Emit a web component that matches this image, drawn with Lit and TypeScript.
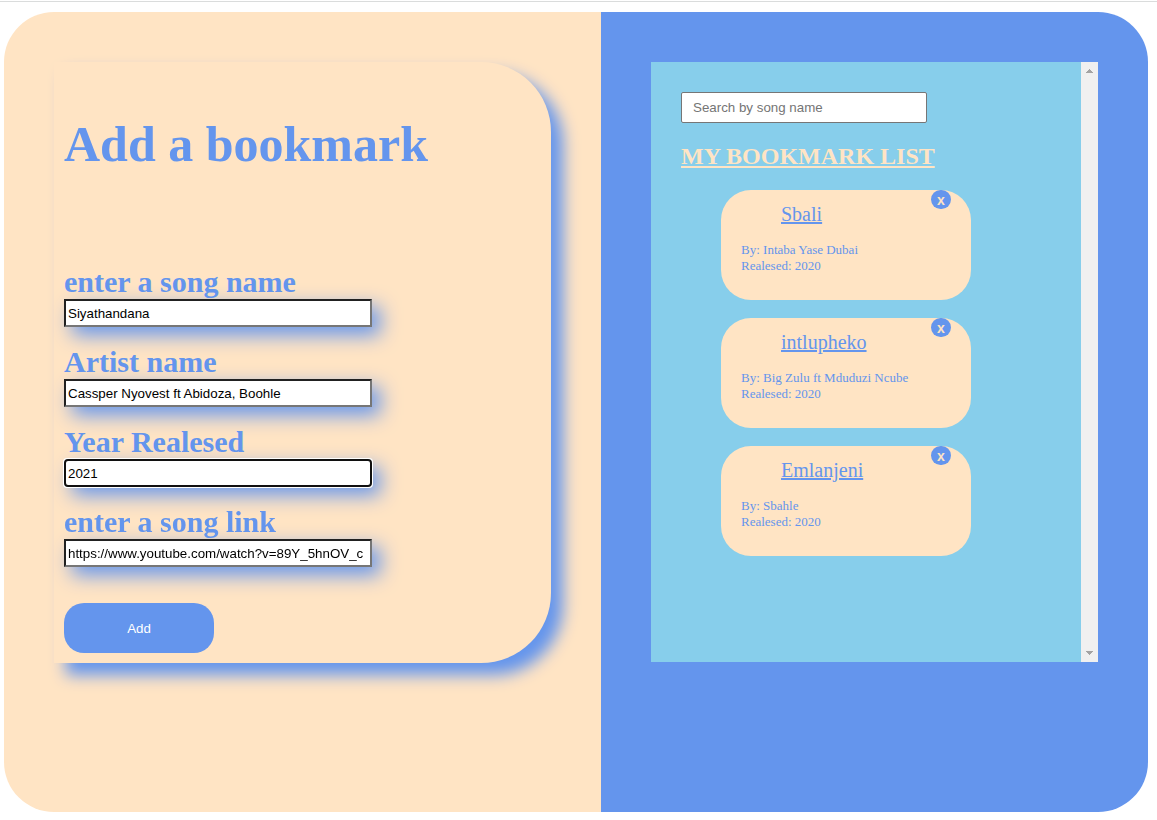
import { LitElement, html, css } from "lit";
import { customElement, property, state, query } from "lit/decorators.js";

interface Song {
  title: string;
  artist: string;
  year: string;
  link: string;
}

@customElement("bookmark-card")
class BookmarkCard extends LitElement {
  @property({ attribute: false }) song!: Song;

  static styles = css`
    :host {
      display: block;
    }
    .card {
      position: relative;
      box-sizing: border-box;
      width: 250px;
      min-height: 110px;
      padding: 13px 20px;
      border-radius: 30px;
      background: bisque;
      color: cornflowerblue;
      font-size: 13px;
      line-height: 16px;
    }
    .title {
      display: block;
      margin: 0 0 16px 40px;
      color: inherit;
      font-size: 20px;
      line-height: 23px;
    }
    .line {
      margin: 0;
    }
    .remove {
      position: absolute;
      top: 0;
      right: 20px;
      width: 20px;
      height: 19px;
      padding: 0;
      border: none;
      border-radius: 10px;
      background: cornflowerblue;
      color: bisque;
      font-family: "Liberation Sans", Arial, sans-serif;
      font-size: 14px;
      font-weight: bold;
      line-height: 20px;
    }
  `;

  private remove() {
    this.dispatchEvent(new CustomEvent("remove"));
  }

  render() {
    return html`
      <article class="card">
        <a class="title" href=${this.song.link}>${this.song.title}</a>
        <p class="line">By: ${this.song.artist}</p>
        <p class="line">Realesed: ${this.song.year}</p>
        <button class="remove" type="button" @click=${this.remove}>x</button>
      </article>
    `;
  }
}

@customElement("app-root")
class AppRoot extends LitElement {
  @state() private songs: Song[] = [
    { title: "Sbali", artist: "Intaba Yase Dubai", year: "2020", link: "#sbali" },
    { title: "intlupheko", artist: "Big Zulu ft Mduduzi Ncube", year: "2020", link: "#intlupheko" },
    { title: "Emlanjeni", artist: "Sbahle", year: "2020", link: "#emlanjeni" },
  ];
  @state() private term = "";
  @query("#year") private yearInput!: HTMLInputElement;

  private fields = [
    { id: "song", label: "enter a song name", value: "Siyathandana" },
    { id: "artist", label: "Artist name", value: "Cassper Nyovest ft Abidoza, Boohle" },
    { id: "year", label: "Year Realesed", value: "2021" },
    { id: "link", label: "enter a song link", value: "https://www.youtube.com/watch?v=89Y_5hnOV_c" },
  ];

  static styles = css`
    :host {
      display: block;
      padding-top: 1px;
      background: white;
      font-family: "Liberation Serif", "Times New Roman", serif;
    }
    .rule {
      height: 1px;
      background: #dadcdc;
    }
    .page {
      display: flex;
      min-height: 800px;
      margin: 10px 9px 8px 4px;
      border-radius: 50px;
      overflow: hidden;
    }
    .left,
    .right {
      min-width: 0;
      padding: 50px;
    }
    .left {
      flex: 1 1 50px;
      background: bisque;
    }
    .right {
      flex: 1 1 0px;
      background: cornflowerblue;
    }
    .panel {
      padding: 54px 10px 10px;
      border-radius: 0 70px 70px 0;
      background: bisque;
      box-shadow: 12px 12px 16px cornflowerblue;
      color: cornflowerblue;
    }
    .heading {
      margin: 0 0 92px;
      font-size: 50px;
      line-height: 57px;
    }
    .form {
      display: flex;
      flex-direction: column;
      align-items: flex-start;
    }
    .field {
      display: flex;
      flex-direction: column;
      margin-bottom: 18px;
    }
    .label {
      font-size: 30px;
      font-weight: bold;
      line-height: 34px;
    }
    .input {
      box-sizing: border-box;
      width: 308px;
      height: 28px;
      font-family: "Liberation Sans", Arial, sans-serif;
      box-shadow: 8px 8px 20px cornflowerblue;
    }
    .add {
      width: 150px;
      height: 50px;
      margin-top: 18px;
      border: none;
      border-radius: 20px;
      background: cornflowerblue;
      color: white;
      font-family: "Liberation Sans", Arial, sans-serif;
    }
    .list {
      display: flex;
      height: 600px;
      background: skyblue;
    }
    .content {
      flex: 1;
      min-width: 0;
      padding: 30px;
      overflow: hidden;
    }
    .search {
      display: block;
      box-sizing: border-box;
      width: 246px;
      height: 31px;
      padding: 1px 11px;
      border: 1px solid #767676;
      border-radius: 2px;
      font-family: "Liberation Sans", Arial, sans-serif;
    }
    .search::placeholder {
      color: #757575;
    }
    .subheading {
      margin: 19px 0 20px;
      color: bisque;
      font-size: 24px;
      line-height: 28px;
      text-decoration: underline;
    }
    .cards {
      display: flex;
      flex-direction: column;
      gap: 18px;
      margin: 0;
      padding: 0 0 0 40px;
      list-style: none;
    }
    .track {
      display: flex;
      flex-direction: column;
      justify-content: space-between;
      width: 17px;
      background: #f0f0f0;
    }
    .arrow {
      display: block;
      width: 17px;
      height: 17px;
      fill: #a3a3a3;
    }
  `;

  firstUpdated() {
    const end = this.yearInput.value.length;
    this.yearInput.focus();
    this.yearInput.setSelectionRange(end, end);
  }

  private add(event: Event) {
    event.preventDefault();
    const data = new FormData(event.target as HTMLFormElement);
    this.songs = [
      ...this.songs,
      {
        title: String(data.get("song")),
        artist: String(data.get("artist")),
        year: String(data.get("year")),
        link: String(data.get("link")),
      },
    ];
  }

  private remove(song: Song) {
    this.songs = this.songs.filter((item) => item !== song);
  }

  private search(event: Event) {
    this.term = (event.target as HTMLInputElement).value.toLowerCase();
  }

  render() {
    const shown = this.songs.filter((song) => song.title.toLowerCase().includes(this.term));
    return html`
      <div class="rule"></div>
      <main class="page">
        <section class="left">
          <div class="panel">
            <h1 class="heading">Add a bookmark</h1>
            <form class="form" @submit=${this.add}>
              ${this.fields.map(
                (field) => html`
                  <div class="field">
                    <label class="label" for=${field.id}>${field.label}</label>
                    <input class="input" type="text" id=${field.id} name=${field.id} value=${field.value} spellcheck="false" />
                  </div>
                `
              )}
              <button class="add" type="submit">Add</button>
            </form>
          </div>
        </section>
        <section class="right">
          <div class="list">
            <div class="content">
              <input class="search" type="text" aria-label="Search by song name" placeholder="Search by song name" @input=${this.search} />
              <h2 class="subheading">MY BOOKMARK LIST</h2>
              <ul class="cards">
                ${shown.map(
                  (song) => html`<li><bookmark-card .song=${song} @remove=${() => this.remove(song)}></bookmark-card></li>`
                )}
              </ul>
            </div>
            <div class="track" aria-hidden="true">
              <svg class="arrow" viewBox="0 0 17 17"><path d="M5 11V10H6V9H7V8H8V7H9V8H10V9H11V10H12V11Z" /></svg>
              <svg class="arrow" viewBox="0 0 17 17"><path d="M5 6V7H6V8H7V9H8V10H9V9H10V8H11V7H12V6Z" /></svg>
            </div>
          </div>
        </section>
      </main>
    `;
  }
}
